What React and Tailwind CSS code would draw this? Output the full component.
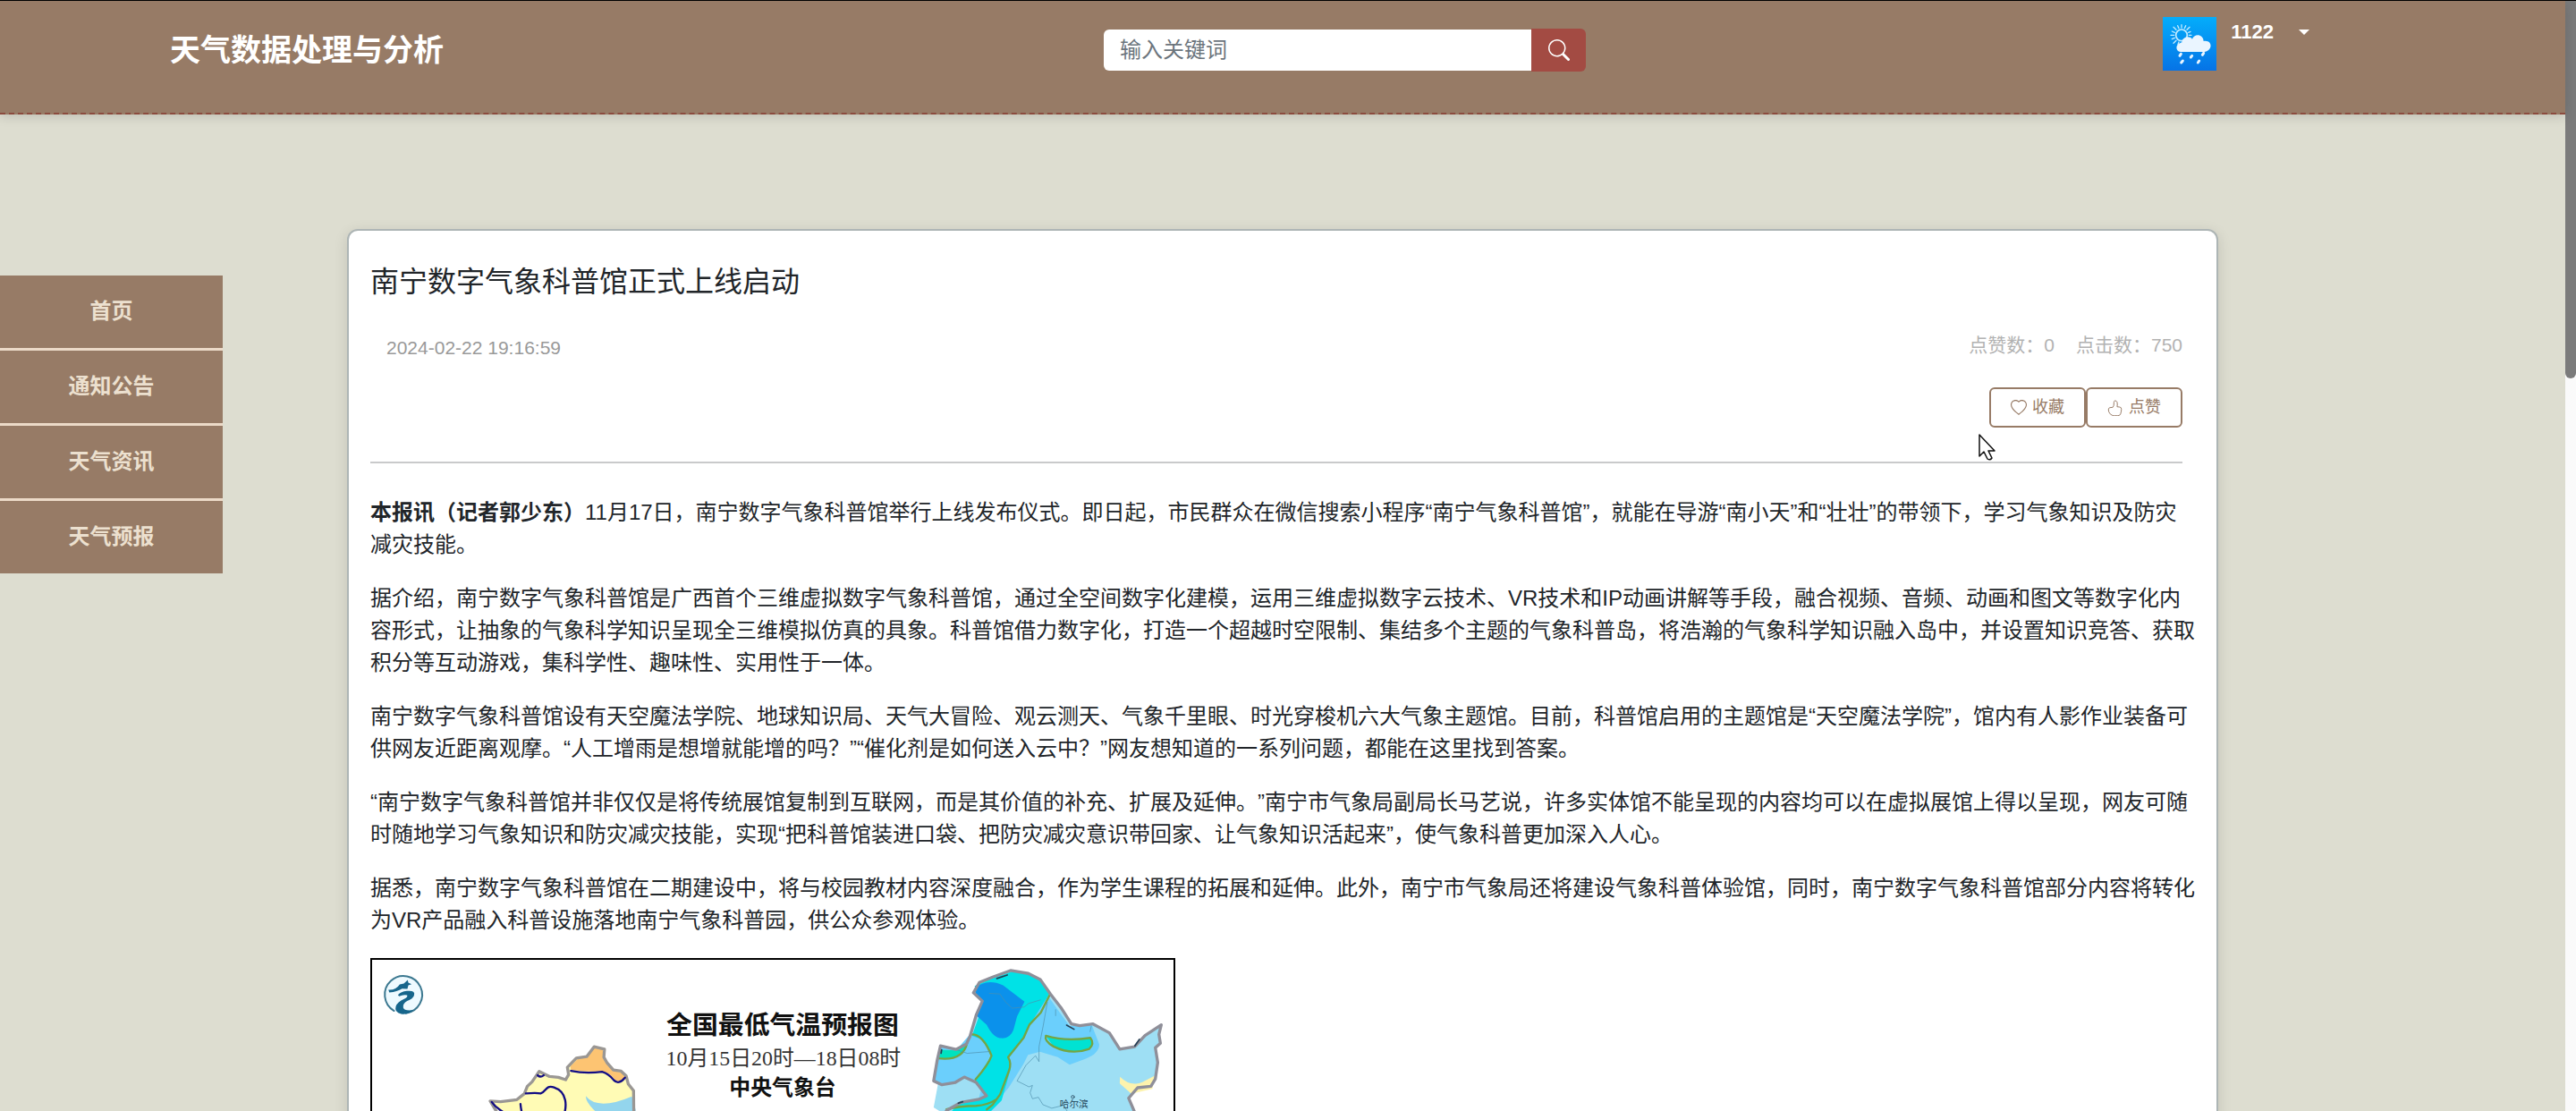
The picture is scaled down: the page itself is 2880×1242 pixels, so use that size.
import React, { useState } from 'react';
import { BsSearch, BsHeart } from 'react-icons/bs';

const navItems = ['首页', '通知公告', '天气资讯', '天气预报'];

const paragraphs = [
  {
    lead: '本报讯（记者郭少东）',
    text: '11月17日，南宁数字气象科普馆举行上线发布仪式。即日起，市民群众在微信搜索小程序“南宁气象科普馆”，就能在导游“南小天”和“壮壮”的带领下，学习气象知识及防灾减灾技能。',
  },
  {
    text: '据介绍，南宁数字气象科普馆是广西首个三维虚拟数字气象科普馆，通过全空间数字化建模，运用三维虚拟数字云技术、VR技术和IP动画讲解等手段，融合视频、音频、动画和图文等数字化内容形式，让抽象的气象科学知识呈现全三维模拟仿真的具象。科普馆借力数字化，打造一个超越时空限制、集结多个主题的气象科普岛，将浩瀚的气象科学知识融入岛中，并设置知识竞答、获取积分等互动游戏，集科学性、趣味性、实用性于一体。',
  },
  {
    text: '南宁数字气象科普馆设有天空魔法学院、地球知识局、天气大冒险、观云测天、气象千里眼、时光穿梭机六大气象主题馆。目前，科普馆启用的主题馆是“天空魔法学院”，馆内有人影作业装备可供网友近距离观摩。“人工增雨是想增就能增的吗？”“催化剂是如何送入云中？”网友想知道的一系列问题，都能在这里找到答案。',
  },
  {
    text: '“南宁数字气象科普馆并非仅仅是将传统展馆复制到互联网，而是其价值的补充、扩展及延伸。”南宁市气象局副局长马艺说，许多实体馆不能呈现的内容均可以在虚拟展馆上得以呈现，网友可随时随地学习气象知识和防灾减灾技能，实现“把科普馆装进口袋、把防灾减灾意识带回家、让气象知识活起来”，使气象科普更加深入人心。',
  },
  {
    text: '据悉，南宁数字气象科普馆在二期建设中，将与校园教材内容深度融合，作为学生课程的拓展和延伸。此外，南宁市气象局还将建设气象科普体验馆，同时，南宁数字气象科普馆部分内容将转化为VR产品融入科普设施落地南宁气象科普园，供公众参观体验。',
  },
];

// Sun behind a rain cloud
const WeatherAvatar = () => (
  <svg viewBox="0 0 180 180" className="size-[60px] shrink-0" aria-hidden="true">
    <defs>
      <linearGradient id="sky" x1="0" y1="0" x2="0" y2="1">
        <stop offset="0" stopColor="#04adfb" />
        <stop offset="1" stopColor="#0673e6" />
      </linearGradient>
    </defs>
    <rect width="180" height="180" fill="url(#sky)" />
    <g stroke="#c5ecff" strokeWidth="4" strokeLinecap="round" fill="none">
      <circle cx="63" cy="61" r="19" strokeWidth="5" />
      <path d="M63 36V26M63 86v9M38 61H27M88 61h8M45 43l-9-9M81 43l9-9M45 79l-9 9M54 38l-4-9M73 38l4-9M40 52l-9-4M40 70l-9 4M86 52l7-3M54 84l-3 8" />
    </g>
    <path
      d="M60 117c-20-3-18-29 4-31 1-20 25-25 35-12 6-20 37-18 38 7 32-5 31 34 2 36z"
      fill="#eaf5ff"
    />
    <g stroke="#eaf5ff" strokeWidth="9" strokeLinecap="round">
      <path d="M61 124l-4 6M98 130l-4 5M137 121l-4 6M67 147l-5 6M122 147l-4 6" />
    </g>
  </svg>
);

const ThumbIcon = ({ className }) => (
  <svg viewBox="0 0 56 56" className={className} fill="none" stroke="currentColor" strokeWidth="3" strokeLinejoin="round">
    <path d="M27 3q-4 1-4 5 1 14-4 18l-10 1q-5 1-5 7 0 9 6 15 6 6 13 6h14q7 0 9-6 3-8 3-17 0-6-6-7l-9-1q2-9 0-16-2-5-7-5z" />
  </svg>
);

const ForecastMap = () => (
  <svg
    viewBox="0 0 900 640"
    className="w-[900px] max-w-full border-2 border-black"
    role="img"
    aria-label="全国最低气温预报图"
  >
    <rect width="900" height="640" fill="#fff" />

    {/* West */}
    <g transform="translate(-14 -23) scale(.3333)" strokeLinejoin="round" strokeLinecap="round">
      {/* Dragon emblem */}
      <circle cx="149" cy="187" r="63" fill="#eefaff" />
      <path d="M116 241a63 63 0 1 1 40 8" fill="none" stroke="#3c7890" strokeWidth="6" />
      <path
        d="M97 170q25 2 38-18l14-3 13-12 2 9 11 5-11 4-3 12-18-1q-16 10-43 13zM129 187q10-11 30-13 31-3 24 16-4 10-23 18-15 8-13 22 3 12 35 8-19 17-42 13-24-5-18-25 5-15 28-25 13-6 10-13-13-3-27 4z"
        fill="#17668c"
      />

      <path
        d="M440 545l35 2 55-7 25-20 10-25 16-15 24-35 35 17 30 3 24 8 10-17-4-25 30-31 35-5 25-33 35 8-2 27 10 18 22 25 26 4 17 16 7 27 18 23 3 300H600l-100-200z"
        fill="#fffbb5"
      />
      <path
        d="M712 440l-2-12 26-26 29-5 25-33 30 8 2 30 16 18 20 24 24 5 12 14q-17 25-35 8-20-25-45-27-48 4-102-4z"
        fill="#fdc472"
      />
      <path d="M762 528q40 50 155 1l13 45v70H820q-8-50-33-72-25-25-25-44z" fill="#93d5ed" />
      <path
        d="M500 645l-60-100 35 2 55-7 25-20 10-25 16-15 24-35 35 17 30 3 24 8 10-17-4-25 30-31 35-5 25-33 35 8-2 27 10 18 22 25 26 4 17 16 7 27 18 23 3 300"
        fill="none"
        stroke="#9a9794"
        strokeWidth="10"
      />
      <g fill="none" stroke="#120c84" strokeWidth="7">
        <path d="M712 443q50 11 105 3 22 6 39 28 17 18 38-8" />
        <path d="M560 519q35-3 50 0c20-5 16-30 45-20 45 15 45 65 30 101M542 555q2 25 12 55" />
        <path d="M445 548q10 15 30 28l30 20M600 458q9 9 20 0" />
      </g>
    </g>

    {/* Northeast */}
    <g transform="translate(465 -24) scale(.3333)" strokeLinejoin="round" strokeLinecap="round">
      <path
        d="M520 362l52 12 35-18 12-25 22-75 20-45-30-28 20-35 45-18 60-25 60 10 40 20 35 50 35 45 35 55 28 6 45-6 55 30 35 55 50-8 35-38 55-36-8 32 5 30-17 15 8 50-8 55-15 25-45 5-30 35 20 60v200H480l40-75 50-60 60-18 45-12-35-45-40-18-30 18-45 2-28-18 15-80z"
        fill="#9edff4"
      />
      <path
        d="M880 190l35 50 40 55 75-3 25 65q0 30-45 48l-55 20-40-25-60-18-40 10-15 30-50 80-60 74h-50l30-120 70-170 50-50z"
        fill="#6bcffc"
      />
      <path d="M520 362l55 12 45-52q40 0 70 70l-50 90-40-15-30 20-55 4-20-18z" fill="#6bcffc" />
      <path
        d="M635 160l45-20 80-28 60 8 38 20 28 48-60 95-30 60-46 60 6 38-30 105-40 40-140 10 30-35 60-18 35-12-35-50 55-86-30-55-35-12 25-70 25-45-30-28z"
        fill="#00e2e6"
      />
      <path
        d="M636 168q40-35 95-10l72 55-25 50-12 45q-12 30-40 28-28 0-50-45l-36-32 20-45-22-28z"
        fill="#0b91eb"
      />
      <path d="M518 375l54 2 38-24q-15 62-98 48z" fill="#00e2bf" />
      <path d="M875 328q65 20 150 7 15 20-4 37-60 22-120-8z" fill="#00e2d3" />
      <path d="M1125 466q35 35 75 18l42-22-8 45-45 10-25 7-40-35z" fill="#fdf3ad" />
      <g fill="none" stroke="#74a544" strokeWidth="7">
        <path d="M888 190l-30 60-38 40-20 45-52 65q12 20 3 45l-30 80-25 35-20 16" />
        <path d="M622 323q40-3 70 72-10 30-54 80M610 352q-15 62-98 52" />
        <path d="M875 328q65 20 150 7 15 20-4 37-60 22-120-8-32-18-26-36zM540 576q45-12 100-12 40-3 65-20" />
      </g>
      <g fill="none" stroke="#4d8eab" strokeWidth="2">
        <path d="M685 185l35 2 20 28 22 20 40-4 15-12 40-12M880 215l-14 80-14 70 0 50-12-20-32 32-30 53 40 20 12-5-8 25 8 20 20-5 15 25 30 12 40-10 15 25M575 375l35 12 75-6M908 240v20M1028 296l-4 18" />
      </g>
      <path
        d="M480 790l20-120 40-90 50-28 60-10 25-12-35-45-40-18-30 18-45 8-28-13 12-70 11-48 52 12 35-18 12-25 22-75 20-45-30-28 20-35 45-18 60-22 60 10 40 20 35 50 35 45 35 55 28 6 45-6 55 30 35 55 50-8 35-38 55-36-8 32 5 30-17 15 8 50-8 55-15 25-45 5-30 35 30 70"
        fill="none"
        stroke="#8f8f99"
        strokeWidth="10"
      />
      <path d="M710 135l35-12M945 292l25 14M1175 362l15-22M524 375l-2 12M580 555l15-5" fill="none" stroke="#243f55" strokeWidth="5" />
      <circle cx="966" cy="534" r="5" fill="none" stroke="#31566b" strokeWidth="3" />
      <text x="970" y="570" textAnchor="middle" fontSize="32" fill="#24475c">哈尔滨</text>
    </g>

    <g textAnchor="middle" fill="#111" className="font-['Liberation_Serif','Noto_Sans_CJK_SC',serif]">
      <text x="461" y="83" fontSize="29" fontWeight="700">全国最低气温预报图</text>
      <text x="462" y="119" fontSize="24" fill="#333">10月15日20时—18日08时</text>
      <text x="461" y="152" fontSize="24" fontWeight="700">中央气象台</text>
    </g>
  </svg>
);

const Header = () => {
  const [keyword, setKeyword] = useState('');

  return (
    <header className="relative grid h-[127px] grid-cols-[15fr_539px_13fr] items-start border-b-2 border-dashed border-[#8b4b3e] bg-[#977b66] px-[190px] text-white shadow-[0_2px_12px_rgba(0,0,0,0.15)]">
      <h1 className="pt-[31px] text-[34px]/[48px] font-bold">天气数据处理与分析</h1>
      <form className="flex items-center pt-[31px]" role="search" onSubmit={(e) => e.preventDefault()}>
        <input
          type="text"
          aria-label="输入关键词"
          placeholder="输入关键词"
          value={keyword}
          onChange={(e) => setKeyword(e.target.value)}
          className="h-[46px] min-w-0 flex-1 rounded-l-md bg-white px-[18px] text-[24px] text-[#212529] placeholder:text-[#6c757d]"
        />
        <button
          type="submit"
          aria-label="搜索"
          className="flex h-12 w-[61px] items-center justify-center rounded-r-md bg-[#a34b43]"
        >
          <BsSearch className="size-6" />
        </button>
      </form>
      <div className="flex items-start justify-end pt-[18px] pr-24">
        <WeatherAvatar />
        <button type="button" className="ml-4 flex items-center text-[22px]/[34px] font-bold">
          1122
          <span className="ml-7 border-x-6 border-t-6 border-x-transparent border-t-white" />
        </button>
      </div>
    </header>
  );
};

const SideNav = () => (
  <nav className="mt-[180px] flex w-[249px] flex-col gap-[3px] bg-[#ecdac8]">
    {navItems.map((item) => (
      <a
        key={item}
        href="#"
        className="flex h-[81px] justify-center bg-[#977b66] pt-[22px] text-[24px]/[36px] font-bold text-[#ece0cf]"
      >
        {item}
      </a>
    ))}
  </nav>
);

const ActionButton = ({ icon: Icon, label }) => (
  <button
    type="button"
    className="flex h-[45px] w-[108px] items-center justify-center gap-[6px] rounded-md border-2 border-[#977b66] text-[18px] text-[#977b66]"
  >
    <Icon className="size-[18px]" />
    {label}
  </button>
);

const Article = () => (
  <main className="mt-32 min-w-0 flex-1 rounded-xl border-2 border-[#adb5b5] bg-white pt-[37px] pr-[22px] pl-6 shadow-[0_4px_16px_rgba(0,0,0,0.12)]">
    <h2 className="text-[32px]/[40px]">南宁数字气象科普馆正式上线启动</h2>
    <div className="mr-4 border-b-2 border-[#c9cacb] pt-[35px] pb-[38px]">
      <div className="flex items-start justify-between text-[21px]">
        <time className="pl-[18px] leading-[38px] text-[#999]">2024-02-22 19:16:59</time>
        <div className="flex gap-6 leading-8 text-[#b2b2b2]">
          <span>点赞数：0</span>
          <span>点击数：750</span>
        </div>
      </div>
      <div className="mt-[25px] flex justify-end">
        <ActionButton icon={BsHeart} label="收藏" />
        <ActionButton icon={ThumbIcon} label="点赞" />
      </div>
    </div>
    <article className="mt-[37px] flex flex-col gap-6 text-[24px]/[36px]">
      {paragraphs.map((p) => (
        <p key={p.text}>
          {p.lead && <strong>{p.lead}</strong>}
          {p.text}
        </p>
      ))}
      <ForecastMap />
    </article>
  </main>
);

const App = () => {
  return (
    <div
      lang="zh-CN"
      className="relative flex h-screen overflow-hidden border-t border-black bg-[#ddddd0] font-['Liberation_Sans','Noto_Sans_CJK_SC',sans-serif] text-[#212529] [text-spacing-trim:space-all]"
    >
      <div className="min-w-0 flex-1">
        <Header />
        <div className="flex items-start">
          <aside className="w-[388px] shrink-0">
            <SideNav />
          </aside>
          <Article />
          <div className="w-[388px] shrink-0" />
        </div>
      </div>

      {/* Scrollbar */}
      <div className="w-3 bg-[#fafafa]">
        <div className="h-[34%] rounded-b-full bg-[#7b7b7b]" />
      </div>

      {/* Mouse pointer */}
      <svg viewBox="0 0 20 30" className="absolute top-[484px] left-[2212px] h-[30px] w-5" aria-hidden="true">
        <path
          d="M1 1v24l5-5 4 8q3 2 5-1l-4-8h7z"
          fill="#fff"
          stroke="#111"
          strokeWidth="1.5"
          strokeLinejoin="round"
        />
      </svg>
    </div>
  );
};

export default App;
